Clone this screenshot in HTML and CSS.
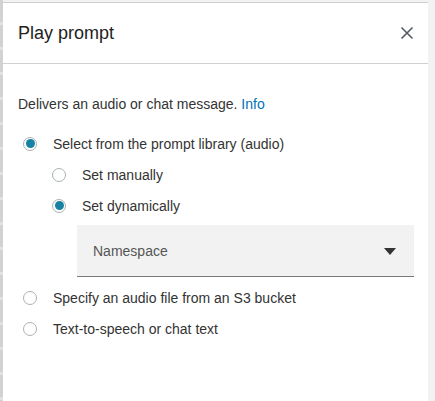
FILE: index.html
```html
<!DOCTYPE html>
<html lang="en">
<head>
    <meta charset="UTF-8">
    <meta name="viewport" content="width=device-width, initial-scale=1.0">
    <title>Play prompt</title>
    <link rel="stylesheet" href="styles.css">
</head>
<body>
    <div class="edge"></div>

    <div class="panel">
        <div class="panel-header">
            <h2>Play prompt</h2>
            <button class="close" aria-label="Close">
                <svg width="14" height="14" viewBox="0 0 14 14">
                    <path d="M1.5 1.5 L12.5 12.5 M12.5 1.5 L1.5 12.5" stroke="#545b64" stroke-width="1.6" fill="none"/>
                </svg>
            </button>
        </div>

        <div class="panel-body">
            <p class="desc">Delivers an audio or chat message. <a href="#">Info</a></p>

            <label class="option">
                <span class="radio checked"></span>
                Select from the prompt library (audio)
            </label>
            <label class="option sub">
                <span class="radio"></span>
                Set manually
            </label>
            <label class="option sub">
                <span class="radio checked"></span>
                Set dynamically
            </label>

            <div class="select">
                <span>Namespace</span>
                <svg width="12" height="7" viewBox="0 0 12 7">
                    <path d="M0 0 H12 L6 7 Z" fill="#333"/>
                </svg>
            </div>

            <label class="option gap">
                <span class="radio"></span>
                Specify an audio file from an S3 bucket
            </label>
            <label class="option">
                <span class="radio"></span>
                Text-to-speech or chat text
            </label>
        </div>
    </div>

    <div class="side"></div>
</body>
</html>
```

FILE: styles.css
```css
body {
    margin: 0;
    height: 401px;
    display: flex;
    background-color: #f2f2f2;
    font-family: "Liberation Sans", Arial, sans-serif;
    color: #333;
    overflow: hidden;
}
.edge {
    width: 3px;
    background: repeating-linear-gradient(#d2d2d2 0 22px, #e2e2e2 22px 25px);
}
.side {
    flex: 1;
}
.panel {
    width: 425px;
    margin-top: 2px;
    background-color: #fff;
    border-top: 1px solid #cfcfcf;
}
.panel-header {
    height: 60px;
    padding: 0 15px;
    display: flex;
    align-items: center;
    justify-content: space-between;
    border-bottom: 1px solid #d0d0d0;
}
.panel-header h2 {
    margin: 0;
    font-size: 18px;
    font-weight: normal;
    color: #222;
}
.close {
    border: none;
    background: none;
    padding: 0;
    margin-right: -1px;
    display: flex;
    cursor: pointer;
}
.panel-body {
    padding: 30px 14px 0 15px;
}
.desc {
    margin: 0 0 14px;
    font-size: 14px;
    line-height: 20px;
}
.desc a {
    color: #0073bb;
    text-decoration: none;
}
.option {
    height: 31px;
    display: flex;
    align-items: center;
    font-size: 14px;
    padding-left: 5px;
}
.option.sub {
    padding-left: 34px;
}
.option.gap {
    margin-top: 5px;
}
.radio {
    width: 14px;
    height: 14px;
    box-sizing: border-box;
    border: 1px solid #aab2b4;
    border-radius: 50%;
    margin-right: 16px;
    display: flex;
    align-items: center;
    justify-content: center;
}
.radio.checked::after {
    content: "";
    width: 9px;
    height: 9px;
    border-radius: 50%;
    background-color: #1783a3;
}
.select {
    margin: 4px 0 0 59px;
    height: 52px;
    padding: 1px 18px 0 16px;
    box-sizing: border-box;
    display: flex;
    align-items: center;
    justify-content: space-between;
    background-color: #f2f2f2;
    border-bottom: 1px solid #7a7a7a;
    font-size: 14px;
    color: #555;
}
```
